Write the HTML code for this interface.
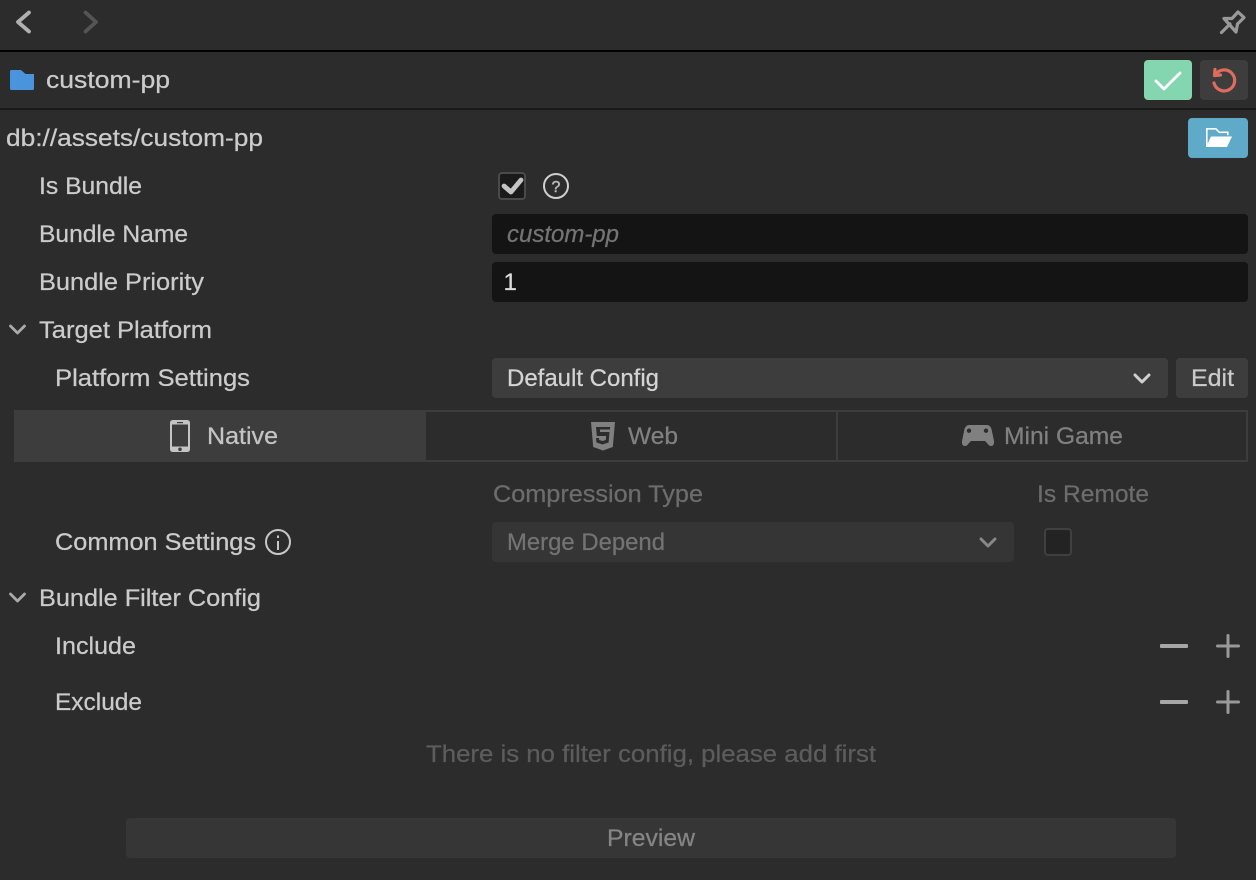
<!DOCTYPE html>
<html><head><meta charset="utf-8"><style>
html,body{margin:0;padding:0;background:#2c2c2c;width:1256px;height:880px;overflow:hidden}
svg{display:block}
text{font-family:"Liberation Sans",sans-serif;font-size:24px;fill:#cbcbcb;stroke:#cbcbcb;stroke-width:.25px}
</style></head><body>
<svg width="1256" height="880" viewBox="0 0 1256 880" xmlns="http://www.w3.org/2000/svg">
<rect width="1256" height="880" fill="#2c2c2c"/>
<rect y="50" width="1256" height="2" fill="#000"/>
<rect y="108" width="1256" height="2" fill="#1a1a1a"/>
<path d="M29 12.500L18 22l11 9.500" fill="none" stroke="#b0b0b0" stroke-width="3.800" stroke-linecap="round" stroke-linejoin="round"/>
<path d="M85.500 12.500L96 22l-10.500 9.500" fill="none" stroke="#555" stroke-width="3.800" stroke-linecap="round" stroke-linejoin="round"/>
<path d="M1221.500 32.500l8.500-8.500" fill="none" stroke="#999" stroke-width="3.200" stroke-linecap="round"/>
<path d="M1224 18.500h8l6-6.500 6 5.500-6.500 6.500-1.500 8z" fill="none" stroke="#999" stroke-width="3.200" stroke-linejoin="round"/>
<path d="M10 71.500q0-1.500 1.500-1.500h9.500l4.500 4H34v14.500q0 1.500-1.500 1.500h-21q-1.500 0-1.500-1.500z" fill="#4a94dd"/>
<text x="46" y="88" textLength="124" lengthAdjust="spacingAndGlyphs">custom-pp</text>
<rect x="1144" y="60" width="48" height="40" rx="4" fill="#83d6b0"/>
<path d="M1156 81l8 8 16-16" fill="none" stroke="#fff" stroke-width="2.800" stroke-linecap="round" stroke-linejoin="round"/>
<rect x="1200" y="60" width="48" height="40" rx="4" fill="#3d3d3d"/>
<path d="M1215.500 74.500a10.500 10.500 0 1 1-1.500 8.500M1215 69.500l-.5 6 6-.5" fill="none" stroke="#e06c5e" stroke-width="3.200" stroke-linecap="round" stroke-linejoin="round"/>
<text x="6" y="146" textLength="257" lengthAdjust="spacingAndGlyphs">db://assets/custom-pp</text>
<rect x="1188" y="118" width="60" height="40" rx="4" fill="#5fa9c9"/>
<path d="M1206.800 147v-18.200h9l3.500 3.500h8.500v3" fill="none" stroke="#fff" stroke-width="1.600"/>
<path d="M1211 136.500h21l-5 10.500h-21z" fill="#fff"/>
<text x="39" y="194" textLength="103" lengthAdjust="spacingAndGlyphs">Is Bundle</text>
<rect x="499" y="173" width="26" height="26" rx="3" fill="#1a1a1a" stroke="#4a4a4a" stroke-width="2"/>
<path d="M504 186l7 6 10-12" fill="none" stroke="#c4c4c4" stroke-width="4.800" stroke-linejoin="round" stroke-linecap="round"/>
<circle cx="556" cy="186" r="12" fill="none" stroke="#cfcfcf" stroke-width="2"/>
<text x="556" y="192" text-anchor="middle" style="font-size:16px;fill:#b8b8b8;stroke:#b8b8b8;stroke-width:.5px">?</text>
<text x="39" y="242" textLength="149" lengthAdjust="spacingAndGlyphs">Bundle Name</text>
<rect x="492" y="214" width="756" height="40" rx="4" fill="#141414"/>
<text x="507" y="242" textLength="112" lengthAdjust="spacingAndGlyphs" style="font-style:italic;fill:#747474;stroke:#747474">custom-pp</text>
<text x="39" y="290" textLength="165" lengthAdjust="spacingAndGlyphs">Bundle Priority</text>
<rect x="492" y="262" width="756" height="40" rx="4" fill="#141414"/>
<text x="503.500" y="290" style="fill:#dcdcdc;stroke:#dcdcdc">1</text>
<path d="M10.500 326l7 7 7-7" fill="none" stroke="#aaa" stroke-width="2.800" stroke-linecap="round" stroke-linejoin="round"/>
<text x="39" y="338" textLength="173" lengthAdjust="spacingAndGlyphs">Target Platform</text>
<text x="55" y="386" textLength="195" lengthAdjust="spacingAndGlyphs">Platform Settings</text>
<rect x="492" y="358" width="676" height="40" rx="4" fill="#3d3d3d"/>
<text x="507" y="386" textLength="152" lengthAdjust="spacingAndGlyphs" style="fill:#d4d4d4;stroke:#d4d4d4">Default Config</text>
<path d="M1135 375l7 7 7-7" fill="none" stroke="#d0d0d0" stroke-width="3" stroke-linecap="round" stroke-linejoin="round"/>
<rect x="1176" y="358" width="72" height="40" rx="4" fill="#3d3d3d"/>
<text x="1191" y="386" textLength="43" lengthAdjust="spacingAndGlyphs">Edit</text>
<rect x="14" y="410" width="412" height="52" fill="#3d3d3d"/>
<rect x="426" y="410" width="822" height="2" fill="#3d3d3d"/>
<rect x="426" y="460" width="822" height="2" fill="#3d3d3d"/>
<rect x="1246" y="410" width="2" height="52" fill="#3d3d3d"/>
<rect x="836" y="410" width="2" height="52" fill="#3d3d3d"/>
<path fill-rule="evenodd" d="M173 420h14q3 0 3 3v26q0 3-3 3h-14q-3 0-3-3v-26q0-3 3-3zM172 424.500v22h16v-22zM177 422v1.200h6V422zM180 447.500a1.800 1.800 0 1 0 0 3.600a1.800 1.800 0 0 0 0-3.600z" fill="#c4c4c4"/>
<text x="207" y="444" textLength="71" lengthAdjust="spacingAndGlyphs" style="fill:#c4c4c4;stroke:#c4c4c4">Native</text>
<path fill-rule="evenodd" d="M591 422h24l-2.200 25-9.800 3.500-9.800-3.500zM596 427l.8 9h9.300l-.3 4-3.300 1-3.300-1-.2-2h-3l.4 4.500 6.100 2 6.100-2 .9-10.500h-9.400l-.2-2.500h10l.3-2.500z" fill="#808080"/>
<text x="628" y="444" textLength="50" lengthAdjust="spacingAndGlyphs" style="fill:#808080;stroke:#808080">Web</text>
<path fill-rule="evenodd" d="M969 425h18q3 0 4.500 4l2.500 12q.5 5-3 5-2 0-4-3l-2-2h-14l-2 2q-2 3-4 3-3.500 0-3-5l2.500-12q1.500-4 4.500-4zM969 428.500a2.200 2.200 0 1 0 0 4.400a2.200 2.200 0 0 0 0-4.400zM986 428.500a2.200 2.200 0 1 0 0 4.400a2.200 2.200 0 0 0 0-4.400z" fill="#808080"/>
<text x="1004" y="444" textLength="119" lengthAdjust="spacingAndGlyphs" style="fill:#808080;stroke:#808080">Mini Game</text>
<text x="493" y="502" textLength="210" lengthAdjust="spacingAndGlyphs" style="fill:#6c6c6c;stroke:#6c6c6c">Compression Type</text>
<text x="1037" y="502" textLength="112" lengthAdjust="spacingAndGlyphs" style="fill:#6c6c6c;stroke:#6c6c6c">Is Remote</text>
<text x="55" y="550" textLength="201" lengthAdjust="spacingAndGlyphs">Common Settings</text>
<circle cx="278" cy="542" r="12" fill="none" stroke="#c8c8c8" stroke-width="2"/>
<rect x="277" y="541" width="2" height="9" fill="#c8c8c8"/><rect x="277" y="535.500" width="2" height="2.500" fill="#c8c8c8"/>
<rect x="492" y="522" width="522" height="40" rx="4" fill="#353535"/>
<text x="507" y="550" textLength="158" lengthAdjust="spacingAndGlyphs" style="fill:#737373;stroke:#737373">Merge Depend</text>
<path d="M981 539l7 7 7-7" fill="none" stroke="#888" stroke-width="3" stroke-linecap="round" stroke-linejoin="round"/>
<rect x="1045" y="529" width="26" height="26" rx="3" fill="#232323" stroke="#404040" stroke-width="2"/>
<path d="M10.500 594l7 7 7-7" fill="none" stroke="#aaa" stroke-width="2.800" stroke-linecap="round" stroke-linejoin="round"/>
<text x="39" y="606" textLength="222" lengthAdjust="spacingAndGlyphs">Bundle Filter Config</text>
<text x="55" y="654" textLength="81" lengthAdjust="spacingAndGlyphs">Include</text>
<rect x="1160" y="644" width="28" height="4" rx="1" fill="#a6a6a6"/>
<path d="M1228 635.500v21M1217.500 646h21" stroke="#999" stroke-width="3" stroke-linecap="round"/>
<text x="55" y="710" textLength="87" lengthAdjust="spacingAndGlyphs">Exclude</text>
<rect x="1160" y="700" width="28" height="4" rx="1" fill="#a6a6a6"/>
<path d="M1228 691.500v21M1217.500 702h21" stroke="#999" stroke-width="3" stroke-linecap="round"/>
<text x="426" y="762" textLength="450" lengthAdjust="spacingAndGlyphs" style="fill:#5c5c5c;stroke:#5c5c5c">There is no filter config, please add first</text>
<rect x="126" y="818" width="1050" height="40" rx="4" fill="#363636"/>
<text x="607" y="846" textLength="88" lengthAdjust="spacingAndGlyphs" style="fill:#858585;stroke:#858585">Preview</text>
</svg>
</body></html>
